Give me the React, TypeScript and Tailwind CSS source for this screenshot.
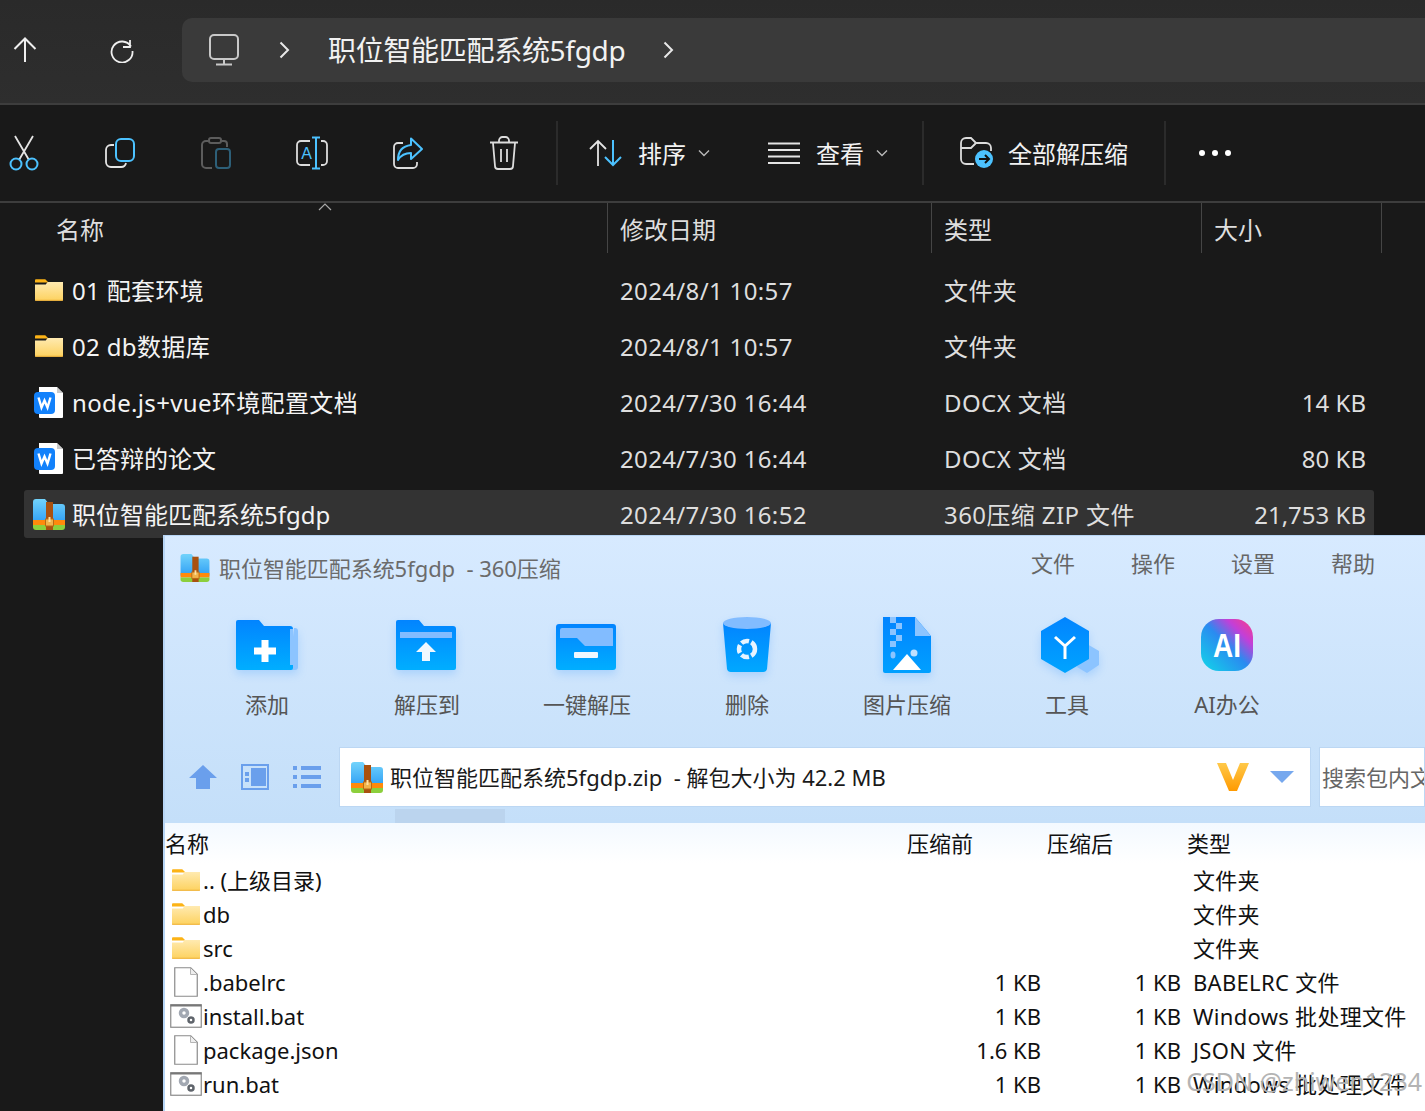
import type { ReactNode } from "react";

const font = "font-['Noto_Sans','Noto_Sans_CJK_SC',sans-serif]";
const softShadow = "shrink-0 drop-shadow-[0_4px_4px_rgba(0,120,255,0.18)]";

function Icon({ w, h, children }: { w: number; h: number; children: ReactNode }) {
  return (
    <svg width={w} height={h} viewBox={`0 0 ${w} ${h}`} fill="none" className="shrink-0">
      {children}
    </svg>
  );
}

function Chevron() {
  return (
    <Icon w={12} h={20}>
      <path d="M2.5 2.5 10 10l-7.5 7.5" stroke="#e8e8e8" strokeWidth="2" />
    </Icon>
  );
}

function SmallChevron() {
  return (
    <Icon w={12} h={8}>
      <path d="M1 1.5 6 6.5l5-5" stroke="#b8b8b8" strokeWidth="1.4" />
    </Icon>
  );
}

function YellowFolder({ w = 28, h = 22 }: { w?: number; h?: number }) {
  return (
    <svg width={w} height={h} viewBox="0 0 30 23" className="shrink-0">
      <defs>
        <linearGradient id="fold" x1="0" y1="0" x2="0" y2="1">
          <stop offset="0" stopColor="#ffeab0" />
          <stop offset="1" stopColor="#fdd25f" />
        </linearGradient>
      </defs>
      <path d="M1 0h10l3.500 3.500H0V1a1 1 0 0 1 1-1z" fill="#fcb316" />
      <path d="M0 5.500h11.500l2-2.500H30v19a1 1 0 0 1-1 1H1a1 1 0 0 1-1-1z" fill="url(#fold)" />
      <path d="M0 22h30v.5a.5.5 0 0 1-.5.5H.5a.5.5 0 0 1-.5-.5z" fill="#eeb13a" />
    </svg>
  );
}

function WpsDoc() {
  return (
    <Icon w={30} h={32}>
      <path d="M5 1h18l6 6v24a1 1 0 0 1-1 1H6a1 1 0 0 1-1-1z" fill="#fff" />
      <path d="M23 1.500 29 7h-6z" fill="#c9c9c9" />
      <rect x="0" y="6" width="21" height="22" rx="4" fill="#1281fb" />
      <path d="M4.500 11.500l3 10 3-7 3 7 3-10" stroke="#fff" strokeWidth="2.400" />
    </Icon>
  );
}

function ZipIcon({ w = 32, h = 31 }: { w?: number; h?: number }) {
  return (
    <svg width={w} height={h} viewBox="0 0 32 31" className="shrink-0">
      <defs>
        <linearGradient id="zipb" x1="0" y1="0" x2="0" y2="1">
          <stop offset="0" stopColor="#72d3fb" />
          <stop offset="1" stopColor="#2f9ff5" />
        </linearGradient>
      </defs>
      <path d="M0 3a3 3 0 0 1 3-3h9l4 5h13a3 3 0 0 1 3 3v16H0z" fill="url(#zipb)" />
      <rect y="21" width="32" height="5" fill="#ff8a0c" />
      <path d="M0 26h32v2a3 3 0 0 1-3 3H3a3 3 0 0 1-3-3z" fill="#8ccf3c" />
      <rect x="13" y="3" width="7" height="28" fill="#a9510f" />
      <rect x="12.500" y="20" width="8" height="7" fill="#f0b44c" stroke="#b96a12" />
      <rect x="15.500" y="18" width="2" height="5" fill="#ffe0a0" />
    </svg>
  );
}

function BlankFile() {
  return (
    <Icon w={24} h={30}>
      <path d="M.75.750h16l6.500 6.500v22h-22.500z" fill="#fff" stroke="#8a8a8a" strokeWidth="1.200" />
      <path d="M16.500 1v6.500H23" fill="#eee" stroke="#b5b5b5" />
    </Icon>
  );
}

function BatFile() {
  return (
    <Icon w={32} h={24}>
      <rect x=".75" y=".750" width="30.500" height="22.500" fill="#fff" stroke="#8a8a8a" strokeWidth="1.200" />
      <rect x=".5" y=".5" width="31" height="2" fill="#777" />
      <circle cx="14" cy="9" r="3.500" fill="#fff" stroke="#a2a8b2" strokeWidth="3.500" />
      <circle cx="21" cy="16" r="2.500" fill="#fff" stroke="#5f646b" strokeWidth="2.500" />
    </Icon>
  );
}

function BlueFolderIcon({ kind }: { kind: "add" | "extract" | "one" }) {
  return (
    <svg width="62" height="52" viewBox="0 0 62 52" className={softShadow}>
      <defs>
        <linearGradient id={`bf${kind}`} x1="0" y1="0" x2="0" y2="1">
          <stop offset="0" stopColor="#0284ff" />
          <stop offset="1" stopColor="#00aeff" />
        </linearGradient>
      </defs>
      {kind === "add" && (
        <>
          <path d="M58 9h1a3 3 0 0 1 3 3v36a3 3 0 0 1-3 3h-6z" fill="#8cc4ff" />
          <path d="M0 3a2 2 0 0 1 2-2h21l5 6h26a3 3 0 0 1 3 3v39a2 2 0 0 1-2 2H3a3 3 0 0 1-3-3z" fill={`url(#bf${kind})`} />
          <path d="M54 10h3v36h-3z" fill="#8cc4ff" />
          <path d="M25.500 21h7v7.500H40v7h-7.500V43h-7v-7.500H18v-7h7.500z" fill="#fff" />
        </>
      )}
      {kind === "extract" && (
        <>
          <path d="M0 3a2 2 0 0 1 2-2h21l5 6h29a3 3 0 0 1 3 3v39a2 2 0 0 1-2 2H3a3 3 0 0 1-3-3z" fill={`url(#bf${kind})`} />
          <rect x="4" y="13" width="52" height="6" fill="#82bcff" />
          <path d="M30 23l10 10h-6v9h-8v-9h-6z" fill="#f0f8ff" />
        </>
      )}
      {kind === "one" && (
        <>
          <rect x="0" y="5" width="60" height="46" rx="3" fill={`url(#bf${kind})`} />
          <path d="M4 11a2 2 0 0 1 2-2h50a1 1 0 0 1 1 1v17H29l-7-7-1-1H4z" fill="#82bcff" />
          <rect x="18" y="33" width="24" height="6" rx="1" fill="#f0f8ff" />
        </>
      )}
    </svg>
  );
}

function TrashIcon() {
  return (
    <svg width="50" height="58" viewBox="0 0 50 58" className={softShadow}>
      <defs>
        <linearGradient id="tr" x1="0" y1="0" x2="0" y2="1">
          <stop offset="0" stopColor="#0284ff" />
          <stop offset="1" stopColor="#00a8ff" />
        </linearGradient>
      </defs>
      <path d="M1 7h48l-4 46a4 4 0 0 1-4 3H9a4 4 0 0 1-4-3z" fill="url(#tr)" />
      <ellipse cx="25" cy="7" rx="24" ry="6" fill="#82bcff" />
      <circle cx="25" cy="33" r="8" fill="none" stroke="#e8f4ff" strokeWidth="4.500" strokeDasharray="8 2.500" />
    </svg>
  );
}

function ImageZipIcon() {
  return (
    <svg width="48" height="56" viewBox="0 0 48 56" className={softShadow}>
      <defs>
        <linearGradient id="iz" x1="0" y1="0" x2="0" y2="1">
          <stop offset="0" stopColor="#0284ff" />
          <stop offset="1" stopColor="#00a0ff" />
        </linearGradient>
      </defs>
      <path d="M0 0h32l16 19v35a2 2 0 0 1-2 2H2a2 2 0 0 1-2-2z" fill="url(#iz)" />
      <path d="M32 0l16 19H32z" fill="#8cc4ff" />
      <g fill="#8cc4ff">
        <rect x="7" y="0" width="6" height="6" />
        <rect x="13" y="6" width="6" height="6" />
        <rect x="7" y="12" width="6" height="6" />
        <rect x="13" y="18" width="6" height="6" />
        <rect x="7" y="24" width="6" height="6" />
        <ellipse cx="10" cy="38" rx="2.500" ry="3.500" />
      </g>
      <circle cx="31" cy="36" r="3.500" fill="#bfe0ff" />
      <path d="M10 53l14-16 14 16z" fill="#fff" />
    </svg>
  );
}

function ToolIcon() {
  return (
    <svg width="60" height="56" viewBox="0 0 60 56" className={`ml-[8px] ${softShadow}`}>
      <defs>
        <linearGradient id="tl" x1="0" y1="0" x2="0" y2="1">
          <stop offset="0" stopColor="#0284ff" />
          <stop offset="1" stopColor="#00a4ff" />
        </linearGradient>
      </defs>
      <path d="M46 27l12 7v14l-12 8-10-6z" fill="#8cc4ff" />
      <path d="M24 0l24 14v28L24 56 0 42V14z" fill="url(#tl)" />
      <path d="M14 20l10 9 10-9M24 29v13" stroke="#fff" strokeWidth="3" fill="none" />
    </svg>
  );
}

function AiIcon() {
  return (
    <svg width="52" height="52" viewBox="0 0 52 52" className="shrink-0">
      <defs>
        <linearGradient id="ai1" x1="0" y1="1" x2="1" y2="0">
          <stop offset="0" stopColor="#10d8e8" />
          <stop offset=".5" stopColor="#2a8bf0" />
          <stop offset=".75" stopColor="#c23fd8" />
          <stop offset="1" stopColor="#ff3d80" />
        </linearGradient>
      </defs>
      <rect width="52" height="52" rx="18" fill="url(#ai1)" />
      <text
        x="26"
        y="38"
        textAnchor="middle"
        fontSize="34"
        fontWeight="700"
        textLength="28"
        lengthAdjust="spacingAndGlyphs"
        fill="#fff"
        fontFamily="'Liberation Sans',sans-serif"
      >
        AI
      </text>
    </svg>
  );
}

const explorerRows = [
  { name: "01 配套环境", date: "2024/8/1 10:57", type: "文件夹", size: "", icon: "folder" },
  { name: "02 db数据库", date: "2024/8/1 10:57", type: "文件夹", size: "", icon: "folder" },
  { name: "node.js+vue环境配置文档", date: "2024/7/30 16:44", type: "DOCX 文档", size: "14 KB", icon: "doc" },
  { name: "已答辩的论文", date: "2024/7/30 16:44", type: "DOCX 文档", size: "80 KB", icon: "doc" },
  { name: "职位智能匹配系统5fgdp", date: "2024/7/30 16:52", type: "360压缩 ZIP 文件", size: "21,753 KB", icon: "zip" },
];

const zipRows = [
  { name: ".. (上级目录)", before: "", after: "", type: "文件夹", icon: "folder" },
  { name: "db", before: "", after: "", type: "文件夹", icon: "folder" },
  { name: "src", before: "", after: "", type: "文件夹", icon: "folder" },
  { name: ".babelrc", before: "1 KB", after: "1 KB", type: "BABELRC 文件", icon: "file" },
  { name: "install.bat", before: "1 KB", after: "1 KB", type: "Windows 批处理文件", icon: "bat" },
  { name: "package.json", before: "1.6 KB", after: "1 KB", type: "JSON 文件", icon: "file" },
  { name: "run.bat", before: "1 KB", after: "1 KB", type: "Windows 批处理文件", icon: "bat" },
];

const tools: { label: string; icon: ReactNode }[] = [
  { label: "添加", icon: <BlueFolderIcon kind="add" /> },
  { label: "解压到", icon: <BlueFolderIcon kind="extract" /> },
  { label: "一键解压", icon: <BlueFolderIcon kind="one" /> },
  { label: "删除", icon: <TrashIcon /> },
  { label: "图片压缩", icon: <ImageZipIcon /> },
  { label: "工具", icon: <ToolIcon /> },
  { label: "AI办公", icon: <AiIcon /> },
];

function ToolbarSlot({ children }: { children: ReactNode }) {
  return <div className="flex w-[96px] shrink-0 items-center justify-center">{children}</div>;
}

function Divider() {
  return <div className="h-[64px] w-[2px] shrink-0 bg-[#2b2b2b]" />;
}

function HeaderCell({ label, className }: { label: string; className: string }) {
  return (
    <div className={`flex h-[50px] items-center border-r border-[#454545] pl-3 pt-[3px] text-[24px] text-[#dedede] ${className}`}>
      {label}
    </div>
  );
}

export default function App() {
  return (
    <div className={`relative h-[1111px] w-[1425px] overflow-hidden bg-[#191919] ${font}`}>
      {/* address bar */}
      <div className="flex h-[103px] items-start bg-gradient-to-b from-[#2a2a2a] to-[#2e2e2e] pt-[18px]">
        <div className="flex h-[64px] w-[182px] shrink-0 items-center">
          <div className="ml-[13px]">
            <Icon w={24} h={26}>
              <path d="M12 25V1.500M1.500 12 12 1.500 22.500 12" stroke="#efefef" strokeWidth="2" />
            </Icon>
          </div>
          <div className="ml-[72px]">
            <Icon w={26} h={26}>
              <path d="M21 3v7h-7M22 9.500A10.500 10.500 0 1 0 23.500 14" stroke="#efefef" strokeWidth="1.800" />
            </Icon>
          </div>
        </div>
        <div className="flex h-[64px] flex-1 items-center rounded-l-[10px] bg-[#3a3a3a] pl-[27px]">
          <Icon w={30} h={32}>
            <rect x="1" y="1" width="28" height="24" rx="4" stroke="#c8c8c8" strokeWidth="2" />
            <path d="M15 25v5M7 30.500h16" stroke="#c8c8c8" strokeWidth="2" />
          </Icon>
          <div className="ml-[39px]">
            <Chevron />
          </div>
          <span className="ml-[38px] text-[28px] leading-none tracking-[-0.3px] text-[#f2f2f2]">职位智能匹配系统5fgdp</span>
          <div className="ml-[37px]">
            <Chevron />
          </div>
        </div>
      </div>
      <div className="h-[2px] bg-[#3d3d3d]" />

      {/* toolbar */}
      <div className="flex h-[96px] items-center">
        <div className="ml-[-24px] flex items-center">
          <ToolbarSlot>
            <Icon w={34} h={36}>
              <path d="M8 1l14 24M26 1 12 25" stroke="#e4e4e4" strokeWidth="1.800" />
              <circle cx="9" cy="29" r="5.500" stroke="#4cc2ff" strokeWidth="2" />
              <circle cx="25" cy="29" r="5.500" stroke="#4cc2ff" strokeWidth="2" />
            </Icon>
          </ToolbarSlot>
          <ToolbarSlot>
            <Icon w={30} h={30}>
              <path d="M9 7H6a5 5 0 0 0-5 5v12a5 5 0 0 0 5 5h10a5 5 0 0 0 5-4" stroke="#e4e4e4" strokeWidth="1.800" />
              <rect x="11" y="1" width="18" height="22" rx="5" stroke="#4cc2ff" strokeWidth="2" />
            </Icon>
          </ToolbarSlot>
          <ToolbarSlot>
            <Icon w={30} h={32}>
              <path d="M8 4H5a4 4 0 0 0-4 4v19a4 4 0 0 0 4 4h6M20 4h3a3 3 0 0 1 3 3v3" stroke="#5c5c5c" strokeWidth="2" />
              <rect x="8" y="1" width="12" height="5" rx="2" stroke="#5c5c5c" strokeWidth="2" />
              <rect x="15" y="12" width="14" height="19" rx="3" stroke="#2d5f78" strokeWidth="2" />
            </Icon>
          </ToolbarSlot>
          <ToolbarSlot>
            <Icon w={34} h={34}>
              <path d="M15 5H6a4 4 0 0 0-4 4v16a4 4 0 0 0 4 4h9M26 5h2a4 4 0 0 1 4 4v16a4 4 0 0 1-4 4h-2" stroke="#dcdcdc" strokeWidth="1.800" />
              <path d="M17 1.500h8M21 1.500v31M17 32.500h8" stroke="#4cc2ff" strokeWidth="2" />
              <text x="11.500" y="23" textAnchor="middle" fontSize="16" fill="#4cc2ff" fontFamily="'Liberation Sans',sans-serif">
                A
              </text>
            </Icon>
          </ToolbarSlot>
          <ToolbarSlot>
            <Icon w={32} h={32}>
              <path d="M11 6H6a4 4 0 0 0-4 4v17a4 4 0 0 0 4 4h15a4 4 0 0 0 4-4v-2" stroke="#dcdcdc" strokeWidth="1.800" />
              <path d="M19 1.500 30 12 19 22v-6c-6 0-10 2-13 7 0-9 5-14 13-15z" stroke="#4cc2ff" strokeWidth="2" strokeLinejoin="round" />
            </Icon>
          </ToolbarSlot>
          <ToolbarSlot>
            <Icon w={30} h={34}>
              <path d="M1 6.500h28M10 6V4.500A3.500 3.500 0 0 1 13.500 1h3A3.500 3.500 0 0 1 20 4.500V6M4 7l2 23a3 3 0 0 0 3 3h12a3 3 0 0 0 3-3l2-23M12 13v13M18 13v13" stroke="#dcdcdc" strokeWidth="1.800" />
            </Icon>
          </ToolbarSlot>
        </div>
        <div className="ml-[4px]">
          <Divider />
        </div>
        <div className="ml-[31px] flex items-center">
          <Icon w={34} h={28}>
            <path d="M9 27V2M1 10l8-8 8 8" stroke="#e4e4e4" strokeWidth="1.800" />
            <path d="M24 1v25M16 18l8 8 8-8" stroke="#4cc2ff" strokeWidth="2" />
          </Icon>
          <span className="ml-[15px] pt-[2px] text-[24px] text-[#f2f2f2]">排序</span>
          <div className="ml-[12px]">
            <SmallChevron />
          </div>
        </div>
        <div className="ml-[58px] flex items-center">
          <Icon w={32} h={22}>
            <path d="M0 1.500h32M0 8h32M0 14.500h32M0 21h32" stroke="#e4e4e4" strokeWidth="1.800" />
          </Icon>
          <span className="ml-[16px] pt-[2px] text-[24px] text-[#f2f2f2]">查看</span>
          <div className="ml-[12px]">
            <SmallChevron />
          </div>
        </div>
        <div className="ml-[34px]">
          <Divider />
        </div>
        <div className="ml-[36px] flex items-center">
          <Icon w={34} h={32}>
            <path d="M14 27H6a5 5 0 0 1-5-5V6a5 5 0 0 1 5-5h5l5 5h10a5 5 0 0 1 5 5v3" stroke="#dcdcdc" strokeWidth="1.800" />
            <path d="M1 11h10l5-5" stroke="#dcdcdc" strokeWidth="1.800" />
            <circle cx="24" cy="22" r="9" fill="#4cc2ff" />
            <path d="M19 22h9M25 18l4 4-4 4" stroke="#111" strokeWidth="2" />
          </Icon>
          <span className="ml-[14px] pt-[2px] text-[24px] text-[#f2f2f2]">全部解压缩</span>
        </div>
        <div className="ml-[36px]">
          <Divider />
        </div>
        <div className="ml-[33px] flex items-center gap-[7px]">
          <div className="h-[6px] w-[6px] rounded-full bg-white" />
          <div className="h-[6px] w-[6px] rounded-full bg-white" />
          <div className="h-[6px] w-[6px] rounded-full bg-white" />
        </div>
      </div>
      <div className="h-[2px] bg-[#3d3d3d]" />

      {/* explorer list */}
      <div className="relative flex">
        <div className="absolute left-[318px] top-0">
          <Icon w={14} h={8}>
            <path d="M1 7l6-6 6 6" stroke="#a8a8a8" strokeWidth="1.200" />
          </Icon>
        </div>
        <HeaderCell label="名称" className="w-[608px] pl-[56px]" />
        <HeaderCell label="修改日期" className="w-[324px]" />
        <HeaderCell label="类型" className="w-[270px]" />
        <HeaderCell label="大小" className="w-[180px]" />
      </div>
      <div className="ml-[24px] mt-[13px] w-[1350px]">
        {explorerRows.map((row, i) => (
          <div
            key={row.name}
            className={`flex h-[48px] items-center ${i === 4 ? "rounded-[3px] bg-[#333333]" : ""} ${i === 0 ? "" : "mt-[8px]"}`}
          >
            <div className="flex w-[48px] shrink-0 justify-center pl-[2px]">
              {row.icon === "folder" && <YellowFolder />}
              {row.icon === "doc" && <WpsDoc />}
              {row.icon === "zip" && <ZipIcon />}
            </div>
            <div className={`w-[548px] shrink-0 whitespace-nowrap pt-[2px] text-[24px] text-[#f4f4f4] ${i <= 2 ? "tracking-[0.35px]" : ""}`}>{row.name}</div>
            <div className="w-[324px] shrink-0 whitespace-nowrap pt-[2px] text-[24px] tracking-[0.35px] text-[#dedede]">{row.date}</div>
            <div className="w-[270px] shrink-0 whitespace-nowrap pt-[2px] text-[24px] tracking-[0.4px] text-[#dedede]">{row.type}</div>
            <div className="w-[152px] shrink-0 whitespace-nowrap pt-[2px] text-right text-[24px] text-[#dedede]">{row.size}</div>
          </div>
        ))}
      </div>

      {/* 360 zip window */}
      <div className="absolute left-[163px] top-[535px] flex h-[576px] w-[1262px] flex-col overflow-hidden border-l-2 border-t border-[#b7d5f5] bg-white">
        <div className="h-[287px] shrink-0 bg-gradient-to-b from-[#d7eaff] to-[#c4dff9]">
          <div className="flex h-[62px] items-center pl-[14px] pt-[2px]">
            <ZipIcon w={32} h={28} />
            <span className="ml-[8px] whitespace-pre text-[22px] tracking-[-0.05px] text-[#6b6b6b]">职位智能匹配系统5fgdp  - 360压缩</span>
            <div className="ml-auto flex w-[422px] pr-[22px] text-[22px] text-[#666666]">
              {["文件", "操作", "设置", "帮助"].map((m) => (
                <div key={m} className="w-[100px] text-center">
                  <span className="relative top-[-5px]">{m}</span>
                </div>
              ))}
            </div>
          </div>
          <div className="flex pl-[22px] pt-[16px]">
            {tools.map((tool) => (
              <div key={tool.label} className="flex w-[160px] flex-col items-center">
                <div className="flex h-[62px] items-center justify-center">{tool.icon}</div>
                <div className="mt-[13px] whitespace-nowrap text-[22px] leading-[30px] text-[#555555]">{tool.label}</div>
              </div>
            ))}
          </div>
          <div className="mt-[28px] flex h-[60px] items-center">
            <div className="flex w-[174px] shrink-0 items-center pl-[24px]">
              <Icon w={28} h={26}>
                <path d="M14 1 28 14h-7v11H7V14H0z" fill="#6a9fec" />
              </Icon>
              <div className="ml-[24px]">
                <Icon w={28} h={26}>
                  <rect x="1" y="1" width="26" height="24" fill="none" stroke="#6a9fec" strokeWidth="2" />
                  <rect x="10" y="4" width="15" height="18" fill="#6a9fec" />
                  <rect x="4" y="8" width="4" height="4" fill="#6a9fec" />
                  <rect x="4" y="14" width="4" height="4" fill="#6a9fec" />
                </Icon>
              </div>
              <div className="ml-[24px]">
                <Icon w={28} h={22}>
                  <rect width="4" height="4" fill="#6a9fec" />
                  <rect x="8" width="20" height="4" fill="#6a9fec" />
                  <rect y="9" width="4" height="4" fill="#6a9fec" />
                  <rect x="8" y="9" width="20" height="4" fill="#6a9fec" />
                  <rect y="18" width="4" height="4" fill="#6a9fec" />
                  <rect x="8" y="18" width="20" height="4" fill="#6a9fec" />
                </Icon>
              </div>
            </div>
            <div className="flex h-[60px] w-[972px] shrink-0 items-center border border-[#bcd7f3] bg-white pl-[11px]">
              <ZipIcon w={32} h={31} />
              <span className="ml-[7px] whitespace-pre text-[22px] text-[#1a1a1a]">职位智能匹配系统5fgdp.zip  - 解包大小为 42.2 MB</span>
              <div className="ml-auto flex items-center pr-[16px]">
                <svg width="32" height="30" viewBox="0 0 32 30">
                  <defs>
                    <linearGradient id="vg" x1="0" y1="0" x2="0" y2="1">
                      <stop offset="0" stopColor="#ffc94a" />
                      <stop offset="1" stopColor="#ff9a00" />
                    </linearGradient>
                  </defs>
                  <path d="M0 1h9l7 17 7-17h9L20 29h-8z" fill="url(#vg)" />
                </svg>
                <div className="ml-[21px]">
                  <Icon w={24} h={12}>
                    <path d="M0 0h24L12 12z" fill="#76a8ee" />
                  </Icon>
                </div>
              </div>
            </div>
            <div className="ml-[8px] flex h-[60px] flex-1 items-center overflow-hidden whitespace-nowrap border border-[#bcd7f3] bg-white pl-[2px] text-[22px] text-[#666666]">
              搜索包内文件
            </div>
          </div>
          <div className="ml-[230px] mt-[2px] h-[14px] w-[110px] bg-[#bbd4ee]" />
        </div>

        <div className="flex h-[40px] shrink-0 items-center bg-gradient-to-b from-[#f3f9ff] to-white text-[22px] text-[#111111]">
          <div className="w-[742px] shrink-0">名称</div>
          <div className="w-[140px] shrink-0">压缩前</div>
          <div className="w-[140px] shrink-0">压缩后</div>
          <div>类型</div>
        </div>
        {zipRows.map((row) => (
          <div key={row.name} className="flex h-[34px] shrink-0 items-center text-[22px] text-[#111111]">
            <div className="flex w-[38px] shrink-0 justify-center pl-[4px]">
              {row.icon === "folder" && <YellowFolder w={28} h={22} />}
              {row.icon === "file" && <BlankFile />}
              {row.icon === "bat" && <BatFile />}
            </div>
            <div className="w-[700px] shrink-0 whitespace-nowrap">{row.name}</div>
            <div className="w-[138px] shrink-0 text-right">{row.before}</div>
            <div className="w-[140px] shrink-0 text-right">{row.after}</div>
            <div className="ml-[12px] whitespace-nowrap tracking-[0.3px]">{row.type}</div>
          </div>
        ))}
        <div className="absolute bottom-[11px] right-[3px] whitespace-nowrap text-[25px] text-[#b4b4b4]">CSDN @zhiwen1234</div>
      </div>
    </div>
  );
}
